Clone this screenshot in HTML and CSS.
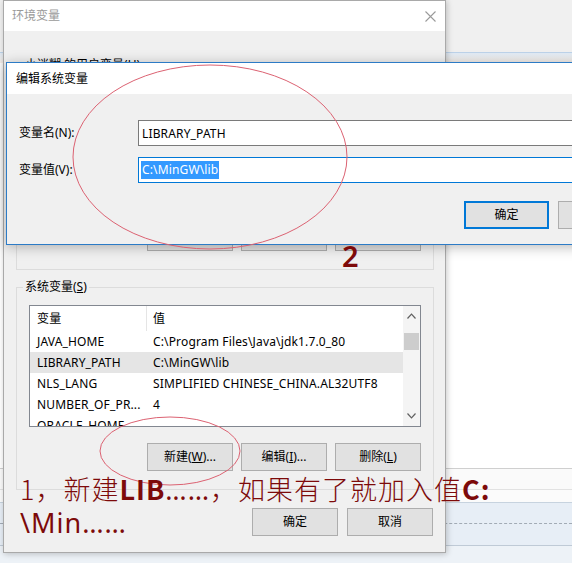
FILE: index.html
```html
<!DOCTYPE html>
<html lang="zh-CN">
<head>
<meta charset="utf-8">
<title>环境变量</title>
<link rel="stylesheet" href="styles.css">
</head>
<body>
<div class="desk">
  <div class="bg-top"></div>
  <div class="bg-strip"></div>
  <div class="bg-white"></div>
  <div class="bg-band"></div>
  <div class="bg-band2"></div>
  <div class="bg-blue"><div class="bg-dash"></div></div>
  <div class="bg-blue2"></div>
</div>

<div class="win env">
  <div class="titlebar">
    <span class="title dim">环境变量</span>
    <svg class="close" width="11" height="11" viewBox="0 0 11 11"><path d="M0.5 0.5L10.5 10.5M10.5 0.5L0.5 10.5" stroke="#9a9a9a" stroke-width="1.1" fill="none"/></svg>
  </div>
  <div class="body">
    <fieldset class="group user">
      <legend>小迷糊 的用户变量(<u>U</u>)</legend>
      <div class="list">
        <div class="tbl">
          <div class="th sep">变量</div><div class="th">值</div>
          <div class="td">Path</div><div class="td">%USERPROFILE%\AppData\Local</div>
          <div class="td">TEMP</div><div class="td">%USERPROFILE%\AppData\Local\Temp</div>
          <div class="td">TMP</div><div class="td">%USERPROFILE%\AppData\Local\Temp</div>
        </div>
        <div class="sb"><div class="arr"></div><div class="thumb"></div><div class="sp"></div><div class="arr"></div></div>
      </div>
      <div class="btnrow">
        <button class="btn">新建(<u>N</u>)...</button>
        <button class="btn">编辑(<u>E</u>)...</button>
        <button class="btn">删除(<u>D</u>)</button>
      </div>
    </fieldset>

    <fieldset class="group sys">
      <legend>系统变量(<u>S</u>)</legend>
      <div class="list">
        <div class="tbl">
          <div class="th sep">变量</div><div class="th">值</div>
          <div class="td">JAVA_HOME</div><div class="td">C:\Program Files\Java\jdk1.7.0_80</div>
          <div class="td sel">LIBRARY_PATH</div><div class="td sel">C:\MinGW\lib</div>
          <div class="td">NLS_LANG</div><div class="td">SIMPLIFIED CHINESE_CHINA.AL32UTF8</div>
          <div class="td">NUMBER_OF_PR...</div><div class="td">4</div>
          <div class="td">ORACLE_HOME</div><div class="td"></div>
        </div>
        <div class="sb">
          <div class="arr"><svg width="9" height="6" viewBox="0 0 9 6"><path d="M0.5 5.5L4.5 1.2L8.5 5.5" stroke="#606060" stroke-width="1.2" fill="none"/></svg></div>
          <div class="thumb"></div>
          <div class="sp"></div>
          <div class="arr"><svg width="9" height="6" viewBox="0 0 9 6"><path d="M0.5 0.5L4.5 4.8L8.5 0.5" stroke="#606060" stroke-width="1.2" fill="none"/></svg></div>
        </div>
      </div>
      <div class="btnrow">
        <button class="btn">新建(<u>W</u>)...</button>
        <button class="btn">编辑(<u>I</u>)...</button>
        <button class="btn">删除(<u>L</u>)</button>
      </div>
    </fieldset>

    <div class="btnrow foot">
      <button class="btn">确定</button>
      <button class="btn">取消</button>
    </div>
  </div>
</div>

<div class="win edit">
  <div class="titlebar etitle"><span class="title">编辑系统变量</span></div>
  <div class="ebody">
    <div class="frow">
      <label class="flabel">变量名(N):</label>
      <div class="input">LIBRARY_PATH</div>
    </div>
    <div class="frow gap">
      <label class="flabel">变量值(V):</label>
      <div class="input focus"><span class="selected">C:\MinGW\lib</span></div>
    </div>
    <div class="btnrow ebtns">
      <button class="btn default">确定</button>
      <button class="btn">取消</button>
    </div>
  </div>
</div>

<svg class="marks" width="572" height="563" viewBox="0 0 572 563">
  <ellipse cx="210" cy="157" rx="137" ry="92" fill="none" stroke="#dc6272" stroke-width="1"/>
  <ellipse cx="170" cy="451" rx="70" ry="34" fill="none" stroke="#dc6272" stroke-width="1"/>
</svg>
<div class="num2">2</div>
<div class="note">1，新建<b>LIB</b><span class="dots">……</span>，如果有了就加入值<b>C:</b><br><span class="lat">\Min</span><span class="dots">……</span></div>
</body>
</html>
```
FILE: styles.css
```css
* { box-sizing: border-box; }
html, body { margin: 0; padding: 0; }
body {
  width: 572px;
  height: 563px;
  overflow: hidden;
  position: relative;
  background: #fff;
  font-family: "Noto Sans", "Noto Sans CJK SC", sans-serif;
  font-size: 12px;
  color: #000;
}

/* background application behind the dialogs */
.desk { position: absolute; left: 0; top: 0; width: 572px; height: 563px; display: flex; flex-direction: column; }
.bg-top { height: 52px; background: #f0f0f0; }
.bg-strip { height: 11px; background: linear-gradient(#e1ebf5, #f7efe8); border-top: 1px solid #bdd3ea; }
.bg-white { height: 405px; background: #fff; }
.bg-band { height: 21px; background: #fafafa; border-top: 1px solid #cfcfcf; }
.bg-band2 { height: 13px; background: #fbfbfb; border-top: 1px solid #e2e2e2; }
.bg-blue { height: 43px; background: #e7eef6; border-top: 1px solid #c7d3df; }
.bg-dash { margin-top: 20px; border-top: 1px dashed #a2abb5; }
.bg-blue2 { flex: 1; background: #edf2f7; border-top: 1px solid #bfcad6; }

/* windows */
.win { position: absolute; }
.env {
  left: 3px; top: 0;
  width: 443px; height: 553px;
  border: 1px solid #a9a9a9;
  background: #f0f0f0;
  box-shadow: 1px 1px 6px rgba(0,0,0,0.22);
  display: flex; flex-direction: column;
}
.titlebar {
  height: 30px;
  background: #fff;
  display: flex; align-items: center;
  padding: 0 9px 0 8px;
  flex: none;
}
.title { font-size: 12px; line-height: 16px; }
.title.dim { color: #9a9a9a; }
.close { margin-left: auto; }

.body { padding: 0 11px 0 12px; display: flex; flex-direction: column; }

.group {
  margin: 0;
  border: 1px solid #dcdcdc;
  padding: 10px 12px 18px 12px;
  min-width: 0;
}
.group.user { margin-top: 26px; }
.group.sys { margin-top: 9px; }
.group legend {
  padding: 0 2px;
  margin-left: -6px;
  font-size: 12px;
  line-height: 16px;
}

.list {
  height: 122px;
  border: 1px solid #828790;
  background: #fff;
  display: flex;
  overflow: hidden;
}
.tbl {
  flex: 1;
  display: grid;
  grid-template-columns: 117px 1fr;
  grid-template-rows: 25px;
  grid-auto-rows: 21px;
  align-content: start;
  overflow: hidden;
  letter-spacing: 0.15px;
}
.th {
  line-height: 25px;
  padding-left: 7px;
  white-space: nowrap;
}
.th + .th { padding-left: 6px; }
.th.sep { border-right: 1px solid #e5e5e5; }
.td {
  line-height: 21px;
  padding-left: 7px;
  white-space: nowrap;
  overflow: hidden;
}
.td:nth-child(even) { padding-left: 6px; }
.td.sel { background: #e5e5e5; }

.sb {
  width: 17px;
  flex: none;
  background: #f4f4f4;
  display: flex; flex-direction: column;
}
.arr { height: 20px; display: flex; align-items: center; justify-content: center; flex: none; }
.thumb { height: 17px; margin: 7px 1px 0 1px; background: #cdcdcd; flex: none; }
.sp { flex: 1; }

.btnrow { display: flex; justify-content: flex-end; gap: 8px; }
.group .btnrow { margin-top: 16px; }
.group.user .btnrow { margin-top: 18px; }
.btn {
  width: 86px;
  height: 28px;
  border: 1px solid #adadad;
  background: #e1e1e1;
  font-family: "Noto Sans", "Noto Sans CJK SC", sans-serif;
  font-size: 12px;
  color: #000;
  padding: 0;
  line-height: 16px;
}
.foot { margin-top: 18px; gap: 9px; padding-right: 1px; }

/* edit dialog */
.edit {
  left: 6px; top: 62px;
  width: 651px;
  border: 1px solid #2c7bc6;
  background: #f0f0f0;
  box-shadow: 0 2px 12px rgba(0,0,0,0.28);
}
.etitle { height: 31px; padding-left: 9px; }
.etitle .title { color: #000; }
.ebody { padding: 26px 12px 15px 12px; }
.frow { display: flex; align-items: center; }
.frow.gap { margin-top: 11px; }
.flabel { width: 119px; flex: none; line-height: 16px; }
.input {
  flex: 1;
  height: 26px;
  border: 1px solid #7a7a7a;
  background: #fff;
  padding-left: 3px;
  display: flex; align-items: center;
  white-space: nowrap;
  letter-spacing: 0.15px;
}
.input.focus { border-color: #0078d7; padding-left: 2px; }
.selected { background: #3399ff; color: #fff; line-height: 18px; padding: 0 1px; }
.ebtns { margin-top: 18px; gap: 9px; }
.btn.default { width: 85px; border: 1px solid #0078d7; box-shadow: inset 0 0 0 1px #0078d7; }

/* annotations drawn over the screenshot */
.marks { position: absolute; left: 0; top: 0; pointer-events: none; }
.num2 {
  position: absolute;
  left: 342px; top: 238px;
  font-family: "Noto Sans", sans-serif;
  font-size: 29px;
  line-height: 36px;
  font-weight: 600;
  color: #7d0a0a;
}
.note {
  position: absolute;
  left: 20px; top: 473px;
  font-family: "Noto Sans CJK SC", sans-serif;
  font-size: 27px;
  line-height: 32px;
  font-weight: 300;
  letter-spacing: 1px;
  color: #7d0a0a;
  white-space: nowrap;
}
.note b { font-weight: 700; }
.note .dots, .note .lat { font-family: "Noto Sans", sans-serif; font-weight: 400; }
```
